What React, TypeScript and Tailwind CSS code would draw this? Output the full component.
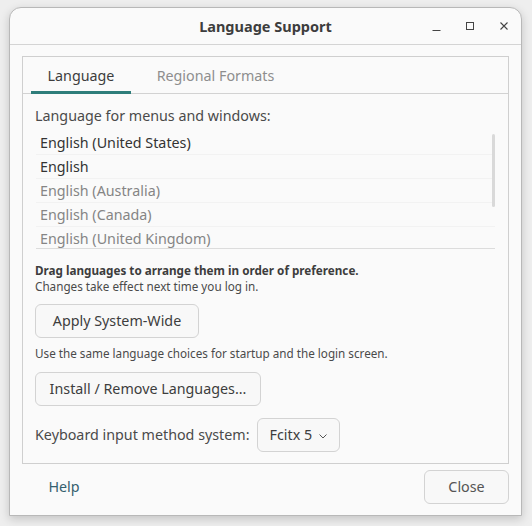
import React from 'react';

const FONT = { fontFamily: '"Noto Sans", "Open Sans", sans-serif' };

const LANGS = [
  { name: 'English (United States)', active: true },
  { name: 'English', active: true },
  { name: 'English (Australia)', active: false },
  { name: 'English (Canada)', active: false },
  { name: 'English (United Kingdom)', active: false },
];

function Button({ children, className = '' }: { children: React.ReactNode; className?: string }) {
  return (
    <div
      className={`flex items-center justify-center h-[34px] rounded-[6px] border border-[#d3d3d3] bg-[#f8f8f8] text-[14.3px] ${className}`}
    >
      {children}
    </div>
  );
}

export default function App() {
  return (
    <div className="w-[532px] h-[526px] bg-[#eeeeee] pt-[7px] pl-[9px] pr-[10px] overflow-hidden" style={FONT}>
      {/* Window */}
      <div className="h-[509px] flex flex-col rounded-t-[12px] border border-[#b8b8b8] bg-[#fafafa] shadow-[0_3px_10px_rgba(0,0,0,0.18)]">
        {/* Title bar */}
        <div className="h-[37px] shrink-0 grid grid-cols-[1fr_auto_1fr] items-center border-b border-[#d4d4d4] rounded-t-[12px]">
          <div />
          <div className="pt-[2px] text-[14.5px] font-bold text-[#3d3d3d]">Language Support</div>
          <div className="flex items-center justify-end gap-[19px] pr-[9px] text-[#3d3d3d]">
            <svg width="15" height="15" viewBox="0 0 15 15">
              <path d="M3.5 11.5h8" stroke="#444" strokeWidth="1" />
            </svg>
            <svg width="15" height="15" viewBox="0 0 15 15">
              <rect x="3.5" y="3.5" width="7" height="7" fill="none" stroke="#444" strokeWidth="1" />
            </svg>
            <svg width="15" height="15" viewBox="0 0 15 15">
              <path d="M3.5 3.5l7 7M10.5 3.5l-7 7" stroke="#444" strokeWidth="1.1" />
            </svg>
          </div>
        </div>

        {/* Content */}
        <div className="flex-1 flex flex-col px-[12px] pt-[11px]">
          {/* Notebook */}
          <div className="h-[408px] flex flex-col border border-[#cfcfcf] bg-[#fafafa]">
            {/* Tabs */}
            <div className="h-[37px] shrink-0 flex border-b border-[#d2d2d2] pl-[8px]">
              <div className="relative w-[100px] flex items-center justify-center pt-[1px] text-[14.3px] text-[#3d3d3d]">
                Language
                <div className="absolute left-0 right-0 bottom-[-1px] h-[3px] bg-[#2e7d7a]" />
              </div>
              <div className="w-[169px] flex items-center justify-center pt-[1px] text-[14.3px] text-[#8e8e8e]">
                Regional Formats
              </div>
            </div>

            {/* Page */}
            <div className="flex flex-col pl-[12px] pr-[12px] pt-[12px]">
              <div className="text-[14.3px] text-[#4a4a4a] leading-[20px]">Language for menus and windows:</div>

              <div className="relative h-[118px] overflow-hidden mt-[5px] ml-[1px] mr-[1px] border-b border-[#dcdcdc]">
                <div className="flex flex-col">
                  {LANGS.map((l) => (
                    <div
                      key={l.name}
                      className={`h-[24px] shrink-0 flex items-center pl-[4px] border-b border-[#f2f2f2] text-[14.3px] ${
                        l.active ? 'text-[#333333]' : 'text-[#858585]'
                      }`}
                    >
                      {l.name}
                    </div>
                  ))}
                </div>
                <div className="absolute right-[0px] top-[3px] w-[3px] h-[73px] rounded-full bg-[#d9d9d9]" />
              </div>

              <div className="mt-[13px] text-[11.7px] font-bold text-[#3d3d3d] leading-[16px]">
                Drag languages to arrange them in order of preference.
              </div>
              <div className="text-[11.7px] text-[#4a4a4a] leading-[16px]">Changes take effect next time you log in.</div>

              <Button className="mt-[10px] w-[164px] text-[#3d3d3d]">Apply System-Wide</Button>

              <div className="mt-[7px] text-[11.7px] text-[#4a4a4a] leading-[16px]">
                Use the same language choices for startup and the login screen.
              </div>

              <Button className="mt-[11px] w-[226px] text-[#3d3d3d]">Install / Remove Languages...</Button>

              <div className="mt-[12px] flex items-center gap-[7px]">
                <span className="text-[14.3px] text-[#4a4a4a]">Keyboard input method system:</span>
                <div className="flex items-center h-[34px] w-[83px] rounded-[6px] border border-[#d3d3d3] bg-[#f8f8f8] pl-[12px] text-[14.3px] text-[#3d3d3d]">
                  Fcitx 5
                  <svg width="12" height="12" viewBox="0 0 12 12" className="ml-[5px] mt-[1px]">
                    <path d="M2.5 4.5l3.5 3.5 3.5-3.5" fill="none" stroke="#555" strokeWidth="1" />
                  </svg>
                </div>
              </div>
            </div>
          </div>

          {/* Footer */}
          <div className="flex items-center justify-between mt-[6px]">
            <div className="w-[84px] h-[34px] flex items-center justify-center text-[14.3px] text-[#35606e]">Help</div>
            <Button className="w-[85px] text-[#555555]">Close</Button>
          </div>
        </div>
      </div>
    </div>
  );
}
